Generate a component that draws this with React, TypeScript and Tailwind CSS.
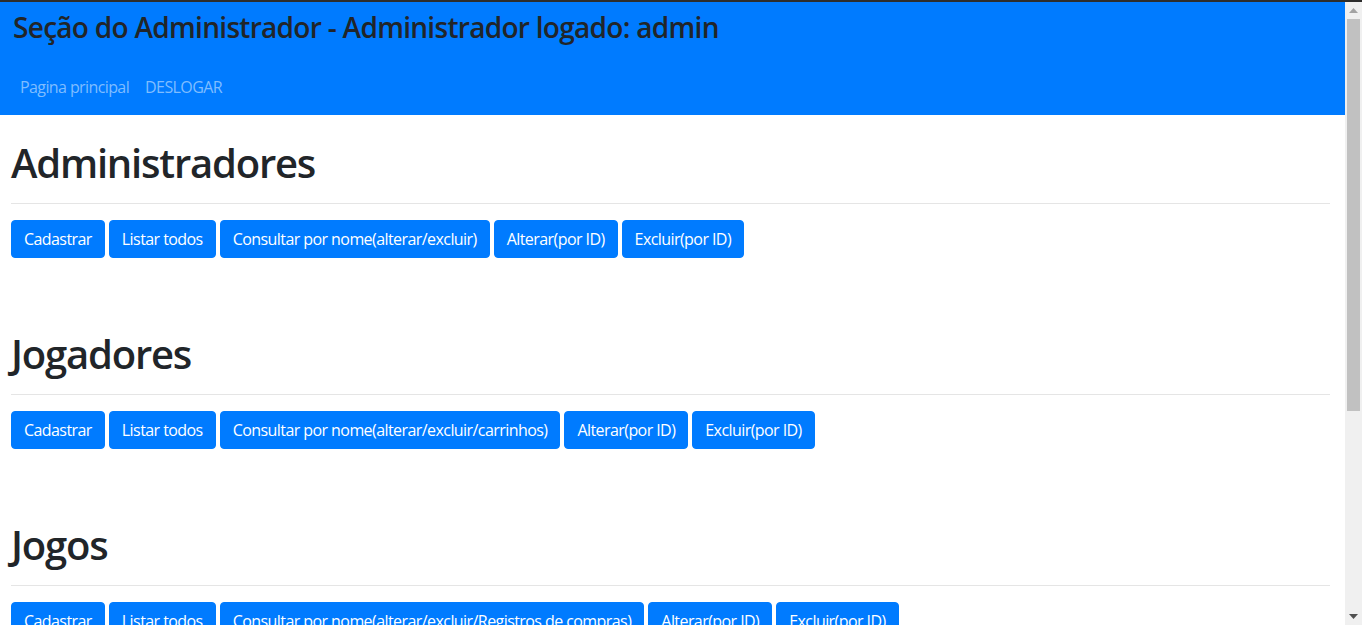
import React from "react";

const sections = [
  {
    title: "Administradores",
    buttons: ["Cadastrar", "Listar todos", "Consultar por nome(alterar/excluir)", "Alterar(por ID)", "Excluir(por ID)"],
  },
  {
    title: "Jogadores",
    buttons: ["Cadastrar", "Listar todos", "Consultar por nome(alterar/excluir/carrinhos)", "Alterar(por ID)", "Excluir(por ID)"],
  },
  {
    title: "Jogos",
    buttons: ["Cadastrar", "Listar todos", "Consultar por nome(alterar/excluir/Registros de compras)", "Alterar(por ID)", "Excluir(por ID)"],
  },
];

function Scrollbar() {
  return (
    <div className="flex w-[17px] shrink-0 flex-col items-center bg-[#f0f0f0]">
      <div className="flex h-[17px] w-full items-center justify-center">
        <svg width="9" height="5" viewBox="0 0 9 5">
          <path d="M4.5 0 L9 5 L0 5 Z" fill="#a3a3a3" />
        </svg>
      </div>
      <div className="h-[392px] w-[13px] bg-[#c1c1c1]" />
      <div className="flex-1" />
      <div className="flex h-[17px] w-full items-center justify-center">
        <svg width="9" height="5" viewBox="0 0 9 5">
          <path d="M0 0 L9 0 L4.5 5 Z" fill="#505050" />
        </svg>
      </div>
    </div>
  );
}

export default function App() {
  return (
    <div
      className="flex h-screen flex-col overflow-hidden bg-white text-[#212529]"
      style={{ fontFamily: '"Open Sans", "Noto Sans", sans-serif' }}
    >
      <div className="h-[2px] shrink-0 bg-[#2d2d2d]" />
      <div className="flex min-h-0 flex-1">
        <div className="min-w-0 flex-1 overflow-hidden">
          <nav className="bg-[#007bff] pt-[8px] pb-[8px]">
            <h3 className="pl-[13px] text-[28px] font-semibold leading-[34px] tracking-[-0.7px] text-[#212529]">
              Seção do Administrador - Administrador logado: admin
            </h3>
            <ul className="mt-[23px] flex pl-[12px] text-[16px] leading-[24px] tracking-[-0.6px]">
              <li>
                <a className="block px-[8px] py-[8px] text-[#7fbdff]">Pagina principal</a>
              </li>
              <li>
                <a className="block px-[8px] py-[8px] text-[#7fbdff]">DESLOGAR</a>
              </li>
            </ul>
          </nav>
          <main className="pl-[11px] pr-[15px] pt-[24px]">
            {sections.map((s, i) => (
              <section key={s.title} className={i > 0 ? "mt-[72px]" : ""}>
                <h1 className="text-[40px] font-semibold leading-[48px] tracking-[-1.2px]">{s.title}</h1>
                <hr className="mt-[16px] mb-[16px] border-0 border-t border-[#e5e5e5]" />
                <div className="flex flex-wrap gap-[4px]">
                  {s.buttons.map((b) => (
                    <button
                      key={b}
                      className="h-[38px] rounded-[4px] border border-[#007bff] bg-[#007bff] px-[12px] text-[16px] leading-[24px] tracking-[-0.57px] text-white"
                    >
                      {b}
                    </button>
                  ))}
                </div>
              </section>
            ))}
          </main>
        </div>
        <Scrollbar />
      </div>
    </div>
  );
}
